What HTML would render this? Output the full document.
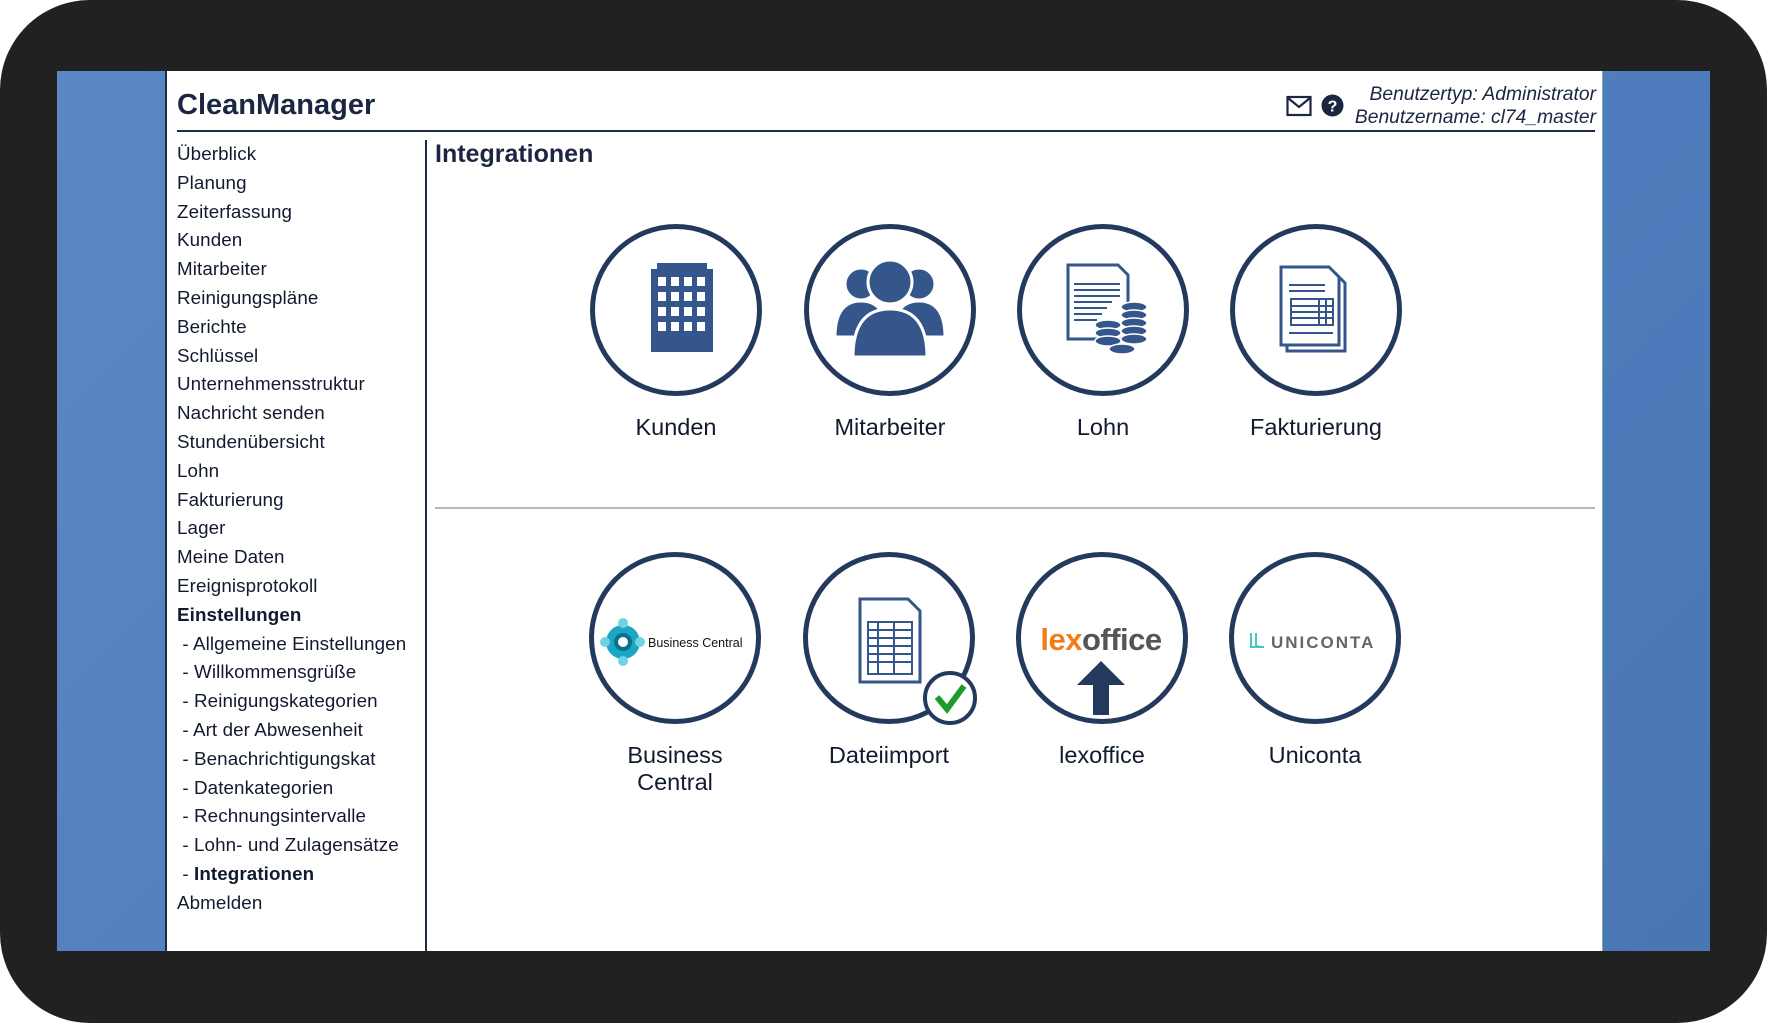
<!DOCTYPE html>
<html><head><meta charset="utf-8"><style>
*{margin:0;padding:0;box-sizing:border-box}
body{width:1767px;height:1023px;background:#fff;position:relative;overflow:hidden;font-family:"Liberation Sans",Arial,sans-serif;color:#111a2e}
.frame{position:absolute;left:0;top:0;width:1767px;height:1023px;background:#222122;border-radius:90px}
.blue{position:absolute;left:57px;top:71px;width:1653px;height:880px;background:linear-gradient(135deg,#5a88c4,#4f7dbd 60%,#4a76b4)}
.panel{position:absolute;left:165px;top:71px;width:1438px;height:880px;background:#fff;border-left:2px solid #1d2b4a;border-right:1px solid #8aa}
.title{position:absolute;left:177px;top:89px;font-size:29px;font-weight:bold;color:#1b2740}
.hline{position:absolute;left:177px;top:130px;width:1418px;height:2px;background:#1d2b4a}
.user{position:absolute;right:171px;top:83px;text-align:right;font-style:italic;font-size:19.3px;line-height:23px;color:#1b2740}
.nav{position:absolute;left:177px;top:140px;font-size:18.8px;line-height:28.8px;color:#111a2e;letter-spacing:0.1px}
.nav b{font-weight:bold}
.vline{position:absolute;left:425px;top:140px;width:2px;height:811px;background:#1d2b4a}
.h2{position:absolute;left:435px;top:140px;font-size:25px;font-weight:bold;color:#1b2740}
.sep{position:absolute;left:435px;top:507px;width:1160px;height:2px;background:#b8b8b8}
.c{position:absolute;width:172px;height:172px;border:5.5px solid #233a5e;border-radius:50%;background:#fff;overflow:visible}
.c svg{position:absolute;left:0;top:0}
.lbl{position:absolute;width:220px;text-align:center;font-size:23.5px;line-height:27px;color:#111a2e}
</style></head><body>
<div class="frame"></div>
<div class="blue"></div>
<div class="panel"></div>
<div class="title">CleanManager</div>
<svg style="position:absolute;left:1286px;top:95px" width="26" height="22" viewBox="0 0 26 22"><rect x="1.5" y="2" width="23" height="18" fill="none" stroke="#1b2740" stroke-width="2.2"/><path d="M2 3 L13 12 L24 3" fill="none" stroke="#1b2740" stroke-width="2.2"/></svg>
<svg style="position:absolute;left:1321px;top:94px" width="23" height="23" viewBox="0 0 23 23"><circle cx="11.5" cy="11.5" r="11" fill="#1b2740"/><text x="11.5" y="17.5" text-anchor="middle" font-family="Liberation Sans" font-weight="bold" font-size="16" fill="#fff">?</text></svg>
<div class="user">Benutzertyp: Administrator<br>Benutzername: cl74_master</div>
<div class="hline"></div>
<div class="nav">Überblick<br>Planung<br>Zeiterfassung<br>Kunden<br>Mitarbeiter<br>Reinigungspläne<br>Berichte<br>Schlüssel<br>Unternehmensstruktur<br>Nachricht senden<br>Stundenübersicht<br>Lohn<br>Fakturierung<br>Lager<br>Meine Daten<br>Ereignisprotokoll<br><b>Einstellungen</b><br>&nbsp;- Allgemeine Einstellungen<br>&nbsp;- Willkommensgrüße<br>&nbsp;- Reinigungskategorien<br>&nbsp;- Art der Abwesenheit<br>&nbsp;- Benachrichtigungskat<br>&nbsp;- Datenkategorien<br>&nbsp;- Rechnungsintervalle<br>&nbsp;- Lohn- und Zulagensätze<br>&nbsp;- <b>Integrationen</b><br>Abmelden</div>
<div class="vline"></div>
<div class="h2">Integrationen</div>

<div class="c" style="left:590px;top:224px"><svg width="161" height="161" viewBox="0 0 161 161"><rect x="56" y="40" width="62" height="83" fill="#34568b"/><rect x="62" y="34" width="50" height="8" fill="#34568b"/><g fill="#fff"><rect x="63" y="48" width="8" height="9"/><rect x="76" y="48" width="8" height="9"/><rect x="89" y="48" width="8" height="9"/><rect x="102" y="48" width="8" height="9"/><rect x="63" y="63" width="8" height="9"/><rect x="76" y="63" width="8" height="9"/><rect x="89" y="63" width="8" height="9"/><rect x="102" y="63" width="8" height="9"/><rect x="63" y="78" width="8" height="9"/><rect x="76" y="78" width="8" height="9"/><rect x="89" y="78" width="8" height="9"/><rect x="102" y="78" width="8" height="9"/><rect x="63" y="93" width="8" height="9"/><rect x="76" y="93" width="8" height="9"/><rect x="89" y="93" width="8" height="9"/><rect x="102" y="93" width="8" height="9"/></g></svg></div>
<div class="c" style="left:804px;top:224px"><svg width="161" height="161" viewBox="0 0 161 161"><g fill="#34568b" stroke="#fff" stroke-width="3"><circle cx="52" cy="55" r="16"/><circle cx="110" cy="55" r="16"/><path d="M26 108 Q26 72 52 72 Q78 72 78 108Z"/><path d="M84 108 Q84 72 110 72 Q136 72 136 108Z"/><circle cx="81" cy="53" r="22"/><path d="M44 128 Q44 80 81 80 Q118 80 118 128Z"/></g></svg></div>
<div class="c" style="left:1017px;top:224px"><svg width="161" height="161" viewBox="0 0 161 161"><path d="M46 36 H96 L106 46 V110 H46Z" fill="#fff" stroke="#34568b" stroke-width="3"/><g stroke="#34568b" stroke-width="2"><line x1="52" y1="55" x2="98" y2="55"/><line x1="52" y1="61" x2="98" y2="61"/><line x1="52" y1="67" x2="98" y2="67"/><line x1="52" y1="73" x2="90" y2="73"/><line x1="52" y1="79" x2="85" y2="79"/><line x1="52" y1="85" x2="80" y2="85"/><line x1="52" y1="91" x2="75" y2="91"/></g><g fill="#34568b" stroke="#fff" stroke-width="1.5"><ellipse cx="112" cy="78" rx="13" ry="5"/><ellipse cx="112" cy="86" rx="13" ry="5"/><ellipse cx="112" cy="94" rx="13" ry="5"/><ellipse cx="112" cy="102" rx="13" ry="5"/><ellipse cx="112" cy="110" rx="13" ry="5"/><ellipse cx="86" cy="96" rx="13" ry="5"/><ellipse cx="86" cy="104" rx="13" ry="5"/><ellipse cx="86" cy="112" rx="13" ry="5"/><ellipse cx="100" cy="120" rx="13" ry="5"/></g></svg></div>
<div class="c" style="left:1230px;top:224px"><svg width="161" height="161" viewBox="0 0 161 161"><path d="M52 44 H100 L110 54 V122 H52Z" fill="#fff" stroke="#34568b" stroke-width="3"/><path d="M46 38 H94 L104 48 V116 H46Z" fill="#fff" stroke="#34568b" stroke-width="3"/><g stroke="#34568b" stroke-width="2" fill="none"><line x1="54" y1="56" x2="90" y2="56"/><line x1="54" y1="62" x2="90" y2="62"/><rect x="56" y="70" width="42" height="26"/><line x1="56" y1="77" x2="98" y2="77"/><line x1="56" y1="83" x2="98" y2="83"/><line x1="56" y1="89" x2="98" y2="89"/><line x1="84" y1="70" x2="84" y2="96"/><line x1="91" y1="70" x2="91" y2="96"/><line x1="54" y1="104" x2="98" y2="104"/></g></svg></div>
<div class="lbl" style="left:566px;top:414px">Kunden</div>
<div class="lbl" style="left:780px;top:414px">Mitarbeiter</div>
<div class="lbl" style="left:993px;top:414px">Lohn</div>
<div class="lbl" style="left:1206px;top:414px">Fakturierung</div>

<div class="sep"></div>

<div class="c" style="left:589px;top:552px"><svg width="161" height="161" viewBox="0 0 161 161"><circle cx="29" cy="85" r="17" fill="#1ba7c4"/><circle cx="29" cy="85" r="9" fill="#0c6f8a"/><circle cx="29" cy="85" r="5" fill="#fff"/><circle cx="29" cy="66" r="5" fill="#6fd3e6"/><circle cx="29" cy="104" r="5" fill="#6fd3e6"/><circle cx="11" cy="85" r="5" fill="#6fd3e6"/><circle cx="46" cy="85" r="5" fill="#6fd3e6"/><text x="54" y="90" font-family="Liberation Sans" font-size="12.5" fill="#111">Business Central</text></svg></div>
<div class="c" style="left:803px;top:552px"><svg width="200" height="200" viewBox="0 0 200 200"><path d="M52 42 H100 L112 54 V125 H52Z" fill="#fff" stroke="#34568b" stroke-width="3"/><g stroke="#34568b" stroke-width="2" fill="none"><rect x="60" y="65" width="44" height="52"/><line x1="60" y1="73" x2="104" y2="73"/><line x1="60" y1="81" x2="104" y2="81"/><line x1="60" y1="89" x2="104" y2="89"/><line x1="60" y1="97" x2="104" y2="97"/><line x1="60" y1="105" x2="104" y2="105"/><line x1="70" y1="65" x2="70" y2="117"/><line x1="86" y1="65" x2="86" y2="117"/></g><circle cx="142" cy="141" r="25" fill="#fff" stroke="#233a5e" stroke-width="4"/><path d="M129 140 L139 152 L156 129" fill="none" stroke="#1f9a2a" stroke-width="6"/></svg></div>
<div class="c" style="left:1016px;top:552px"><svg width="161" height="161" viewBox="0 0 161 161"><text x="80" y="93" text-anchor="middle" font-family="Liberation Sans" font-weight="bold" font-size="31" letter-spacing="-0.5"><tspan fill="#f07d16">lex</tspan><tspan fill="#555">office</tspan></text><path d="M80 104 L104 128 H88 V158 H72 V128 H56Z" fill="#233a5e"/></svg></div>
<div class="c" style="left:1229px;top:552px"><svg width="161" height="161" viewBox="0 0 161 161"><path d="M17 76 V90 H28 M22 76 V88 Q22 90 30 90" fill="none" stroke="#4cc4c0" stroke-width="2"/><text x="37" y="91" font-family="Liberation Sans" font-weight="bold" font-size="17" letter-spacing="2" fill="#666">UNICONTA</text></svg></div>
<div class="lbl" style="left:565px;top:742px">Business<br>Central</div>
<div class="lbl" style="left:779px;top:742px">Dateiimport</div>
<div class="lbl" style="left:992px;top:742px">lexoffice</div>
<div class="lbl" style="left:1205px;top:742px">Uniconta</div>
</body></html>
